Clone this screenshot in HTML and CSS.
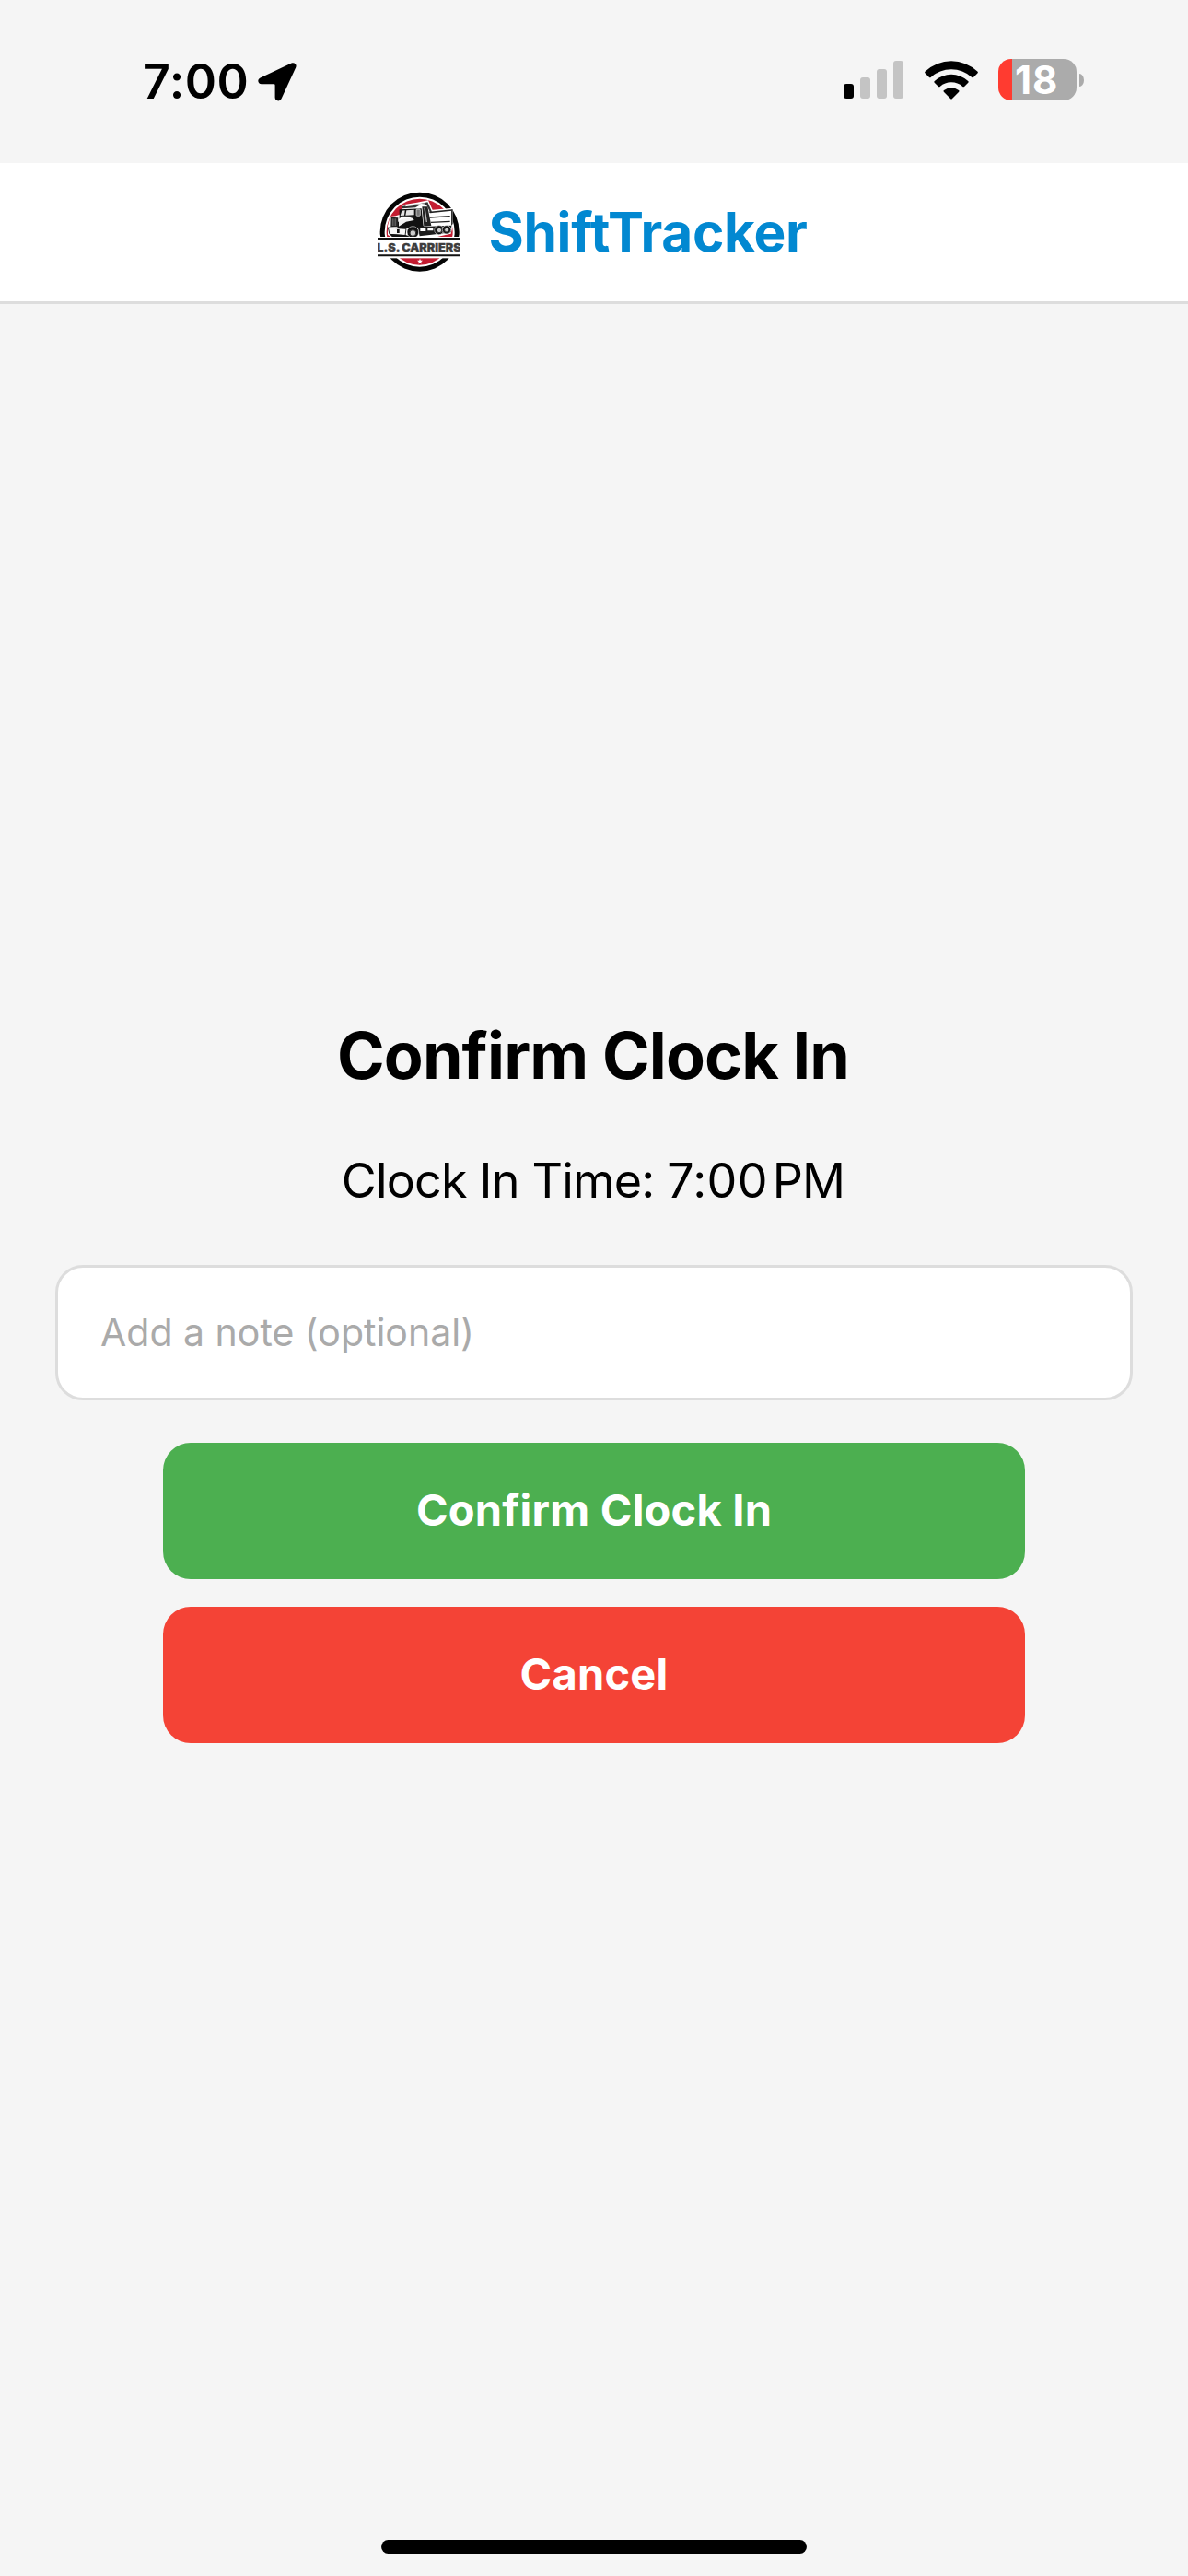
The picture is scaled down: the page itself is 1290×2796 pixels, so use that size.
FILE: index.html
```html
<!DOCTYPE html>
<html lang="en">
<head>
<meta charset="utf-8">
<meta name="viewport" content="width=device-width">
<title>ShiftTracker</title>
<link rel="stylesheet" href="styles.css">
</head>
<body>
<div class="screen">
  <div class="status-bar">
    <div class="status-left">
      <span class="clock">7:00</span>
      <svg class="location" viewBox="0 0 42 42" width="42" height="42" aria-hidden="true">
        <path d="M36.5 .6C39.8-.8 42.6 2 41.2 5.3L25.6 39.1C23.9 42.8 18.6 41.8 18.6 37.8V24.4Q18.6 23.3 17.5 23.3H4C0 23.3-1.2 18.2 2.6 16.4Z"/>
      </svg>
    </div>
    <div class="status-right">
      <svg class="signal" viewBox="0 0 65 42" width="65" height="42" aria-hidden="true">
        <rect x="0" y="25" width="11" height="16" rx="3"/>
        <g fill="#c4c4c4">
          <rect x="18" y="18" width="11" height="23" rx="3"/>
          <rect x="36" y="9" width="11" height="32" rx="3"/>
          <rect x="54" y="0" width="11" height="41" rx="3"/>
        </g>
      </svg>
      <svg class="wifi" viewBox="0 0 58 42" width="58" height="42" aria-hidden="true">
        <path d="M.6 13.6Q-.4 12.5 .7 11.5A41.5 41.5 0 0 1 57.3 11.5Q58.4 12.5 57.4 13.6L53 18Q52.2 18.7 51.3 17.9A33 33 0 0 0 6.7 17.9Q5.8 18.7 5 18Z"/>
        <path d="M10.7 23.7Q9.8 22.8 10.8 21.9A27 27 0 0 1 47.2 21.9Q48.2 22.8 47.3 23.7L43 28Q42.2 28.7 41.3 28A18.6 18.6 0 0 0 16.7 28Q15.8 28.7 15 28Z"/>
        <path d="M20.8 33.7Q19.9 32.8 21 32A13 13 0 0 1 37 32Q38.1 32.8 37.2 33.7L30 41Q29 42 28 41Z"/>
      </svg>
      <div class="battery">
        <div class="battery-body"><span class="battery-level">18</span></div>
        <div class="battery-cap"></div>
      </div>
    </div>
  </div>

  <header class="header">
    <svg class="logo" viewBox="33 36 270 270" width="90" height="90" role="img" aria-label="L.S. Carriers">
      <circle cx="170" cy="170" r="129" fill="#050505"/>
      <circle cx="170" cy="170" r="114" fill="#fff"/>
      <circle cx="170" cy="170" r="108" fill="#c31c31"/>
      <!-- dump truck -->
      <path d="M112 94L116 82L162 74L198 67L212 98L278 92L278 150L272 176L212 190L84 190L66 180L66 150L74 120L92 118L104 114Z" fill="#fff"/>
      <path d="M114 86L176 77L196 73L210 104L204 106L192 82L168 84L156 91L114 94Z" fill="#333"/>
      <path d="M124 86L188 78" stroke="#fff" stroke-width="3"/>
      <path d="M104 97L176 94L182 150L188 158L98 160L96 138L124 132L154 120L110 119L104 128Z" fill="#111"/>
      <path d="M112 101L122 100L120 116L107 117ZM127 100L152 98L152 115L124 116Z" fill="#e4e4e4"/>
      <rect x="159" y="96" width="13" height="22" rx="3" fill="#777" stroke="#eee" stroke-width="2"/>
      <path d="M178 88L196 88L208 150L184 152Z" fill="#222"/>
      <path d="M186 92L193 138" stroke="#bbb" stroke-width="4"/>
      <path d="M200 104L276 97V101L204 109Z" fill="#222"/>
      <path d="M203 123L269 119M207 139L269 136" stroke="#222" stroke-width="4"/>
      <path d="M273 98V150L278 144V96Z" fill="#333"/>
      <path d="M77 122L100 124L99 154L76 154Z" fill="#222"/>
      <path d="M82 127V150M87 127V150M92 127V150" stroke="#8b8b8b" stroke-width="2"/>
      <path d="M102 133Q118 124 148 125L152 132L126 137L102 152Z" fill="#f2f2f2"/>
      <path d="M67 156L126 160L123 182L72 178Z" fill="#f7f7f7" stroke="#222" stroke-width="3"/>
      <path d="M72 177L124 180L148 187L126 192L82 188ZM96 162H104V174H96Z" fill="#111"/>
      <path d="M164 154L274 149L272 172L170 184Z" fill="#1a1a1a"/>
      <path d="M172 158H190V168H172ZM196 157H214V166H196Z" fill="#fff"/>
      <g fill="#111" stroke="#ddd" stroke-width="2">
        <circle cx="148" cy="171" r="19"/>
        <circle cx="233" cy="164" r="15"/>
        <circle cx="258" cy="163" r="14"/>
      </g>
      <g fill="#ccc" stroke="#333" stroke-width="3">
        <circle cx="148" cy="174" r="10"/>
        <circle cx="234" cy="165" r="8"/>
        <circle cx="258" cy="164" r="7"/>
      </g>
      <!-- name band -->
      <rect x="33" y="186" width="270" height="70" fill="#fff"/>
      <path d="M33 192H303M33 247H303" stroke="#111" stroke-width="6"/>
      <text x="31" y="235" class="logo-name" textLength="274" lengthAdjust="spacingAndGlyphs">L.S. CARRIERS</text>
      <path d="M171 257L173.5 263.500H180L175 268L177 274.500L171 271L165 274.500L167 268L162 263.500H168.500Z" fill="#fff"/>
    </svg>
    <span class="brand">ShiftTracker</span>
  </header>

  <main class="content">
    <h1 class="title">Confirm Clock In</h1>
    <p class="time">Clock In Time: <span class="digits">7:00</span><span class="thin">&#8239;</span>PM</p>
    <input class="note" type="text" placeholder="Add a note (optional)">
    <button class="button confirm" type="button">Confirm Clock In</button>
    <button class="button cancel" type="button">Cancel</button>
  </main>

  <div class="home-area"><div class="home-indicator"></div></div>
</div>
</body>
</html>
```
FILE: styles.css
```css
* {
  box-sizing: border-box;
}

body {
  margin: 0;
  background: #f5f5f5;
  color: #000;
  font-family: Inter, "Liberation Sans", sans-serif;
}

svg {
  display: block;
  flex: none;
}

.screen {
  display: flex;
  flex-direction: column;
  width: 1290px;
  height: 2796px;
}

.status-bar {
  display: flex;
  justify-content: space-between;
  align-items: center;
  height: 177px;
  padding: 0 113px 0 155px;
}

.status-left {
  display: flex;
  align-items: center;
  gap: 10px;
}

.clock {
  font-size: 52px;
  font-weight: 600;
  line-height: 64px;
  letter-spacing: 0.5px;
}

.status-right {
  display: flex;
  align-items: center;
  padding-bottom: 4px;
}

.wifi {
  margin: 0 22px 0 23px;
}

.battery {
  display: flex;
  align-items: center;
  gap: 3px;
}

.battery-body {
  width: 85px;
  height: 45px;
  padding-left: 18px;
  border-radius: 14px;
  background: linear-gradient(to right, #ff3b30 15px, #ababab 15px);
}

.battery-level {
  display: block;
  color: #fff;
  font-size: 42px;
  font-weight: 700;
  line-height: 45px;
  letter-spacing: 1px;
}

.battery-cap {
  width: 5px;
  height: 14px;
  border-radius: 0 5px 5px 0 / 0 7px 7px 0;
  background: #ababab;
}

.header {
  display: flex;
  justify-content: center;
  align-items: center;
  gap: 30px;
  height: 153px;
  padding-right: 3px;
  border-bottom: 3px solid #ddd;
  background: #fff;
}

.logo-name {
  fill: #3d3d3d;
  stroke: #3d3d3d;
  stroke-width: 1px;
  font-size: 36px;
  font-weight: 900;
}

.brand {
  color: #0288d1;
  font-size: 58.5px;
  font-weight: 700;
  line-height: 72px;
  letter-spacing: -0.28px;
}

.content {
  display: flex;
  flex: 1;
  flex-direction: column;
  justify-content: center;
  align-items: center;
  padding: 0 60px;
}

.title {
  margin: 0 0 60px;
  padding-right: 2px;
  font-size: 70px;
  font-weight: 700;
  line-height: 87px;
  letter-spacing: -0.9px;
}

.time {
  margin: 0 0 60px;
  padding: 1px 2px 0 0;
  font-size: 52px;
  line-height: 63px;
  letter-spacing: -0.8px;
}

.digits {
  letter-spacing: 0.3px;
}

.thin {
  letter-spacing: -4.5px;
}

.note {
  width: 100%;
  height: 147px;
  margin: 0 0 46px;
  padding: 0 45px 2px 46px;
  border: 3px solid #ddd;
  border-radius: 30px;
  background: #fff;
  color: #000;
  font-family: inherit;
  font-size: 41px;
}

.note::placeholder {
  color: #aaa;
  opacity: 1;
}

.button {
  width: 80%;
  height: 148px;
  margin: 0 0 30px;
  padding: 0 0 3px;
  border: 0;
  border-radius: 30px;
  color: #fff;
  font-family: inherit;
  font-size: 47px;
  font-weight: 700;
  letter-spacing: 0.2px;
}

.confirm {
  background: #4caf50;
}

.cancel {
  background: #f44336;
}

.home-area {
  display: flex;
  justify-content: center;
  align-items: flex-end;
  height: 102px;
  padding-bottom: 24px;
}

.home-indicator {
  width: 462px;
  height: 15px;
  border-radius: 8px;
  background: #000;
}
```
